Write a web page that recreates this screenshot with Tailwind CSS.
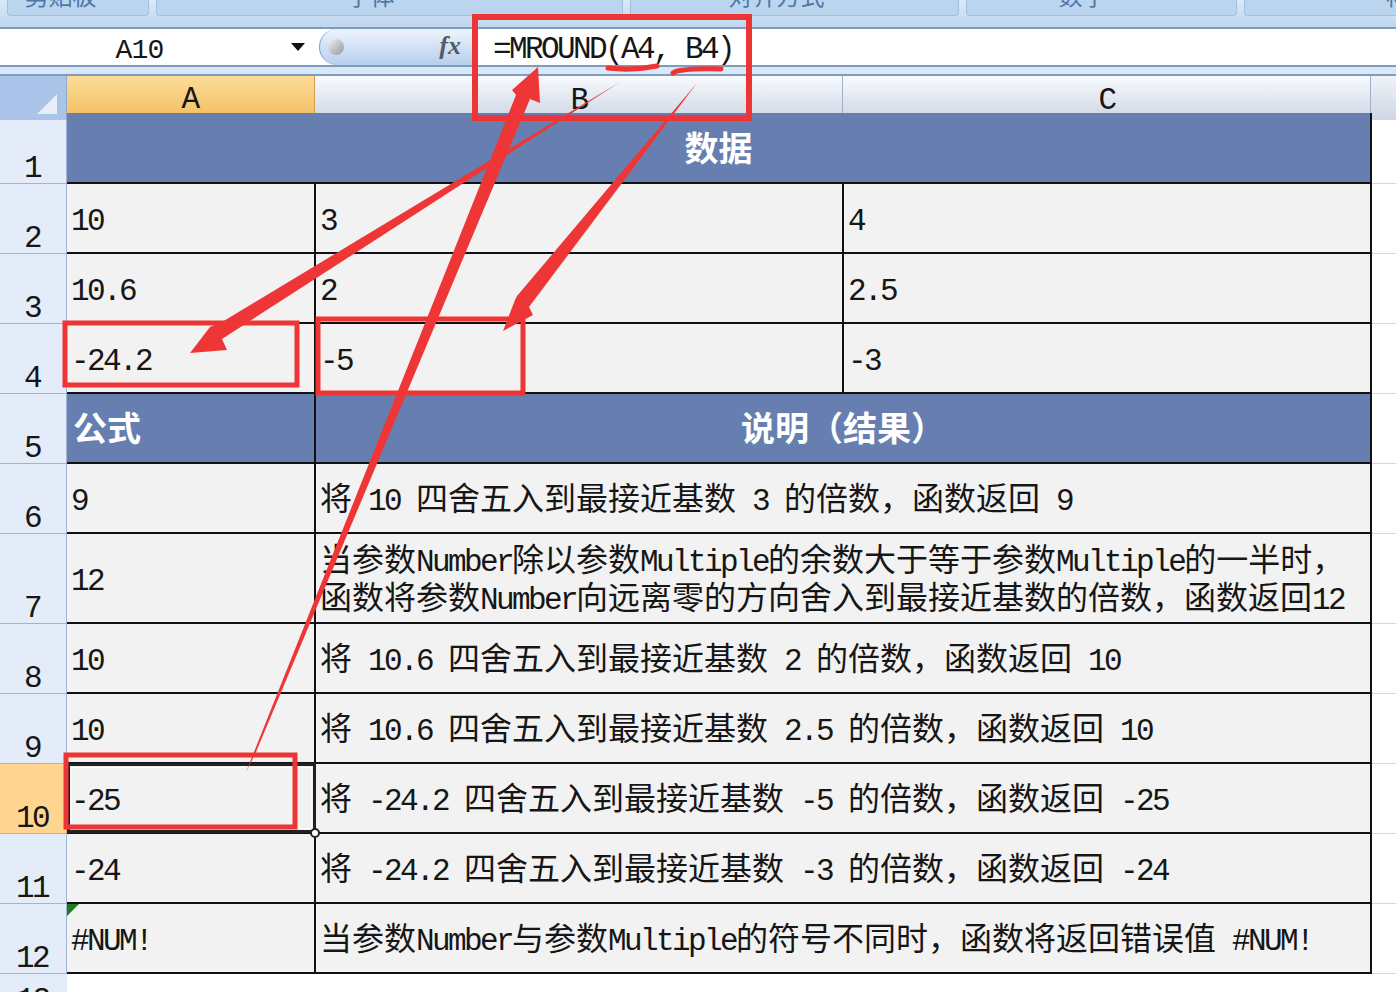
<!DOCTYPE html>
<html lang="zh-CN">
<head>
  <meta charset="UTF-8" />
  <title>MROUND</title>
  <script src="https://cdn.jsdelivr.net/npm/@tailwindcss/browser@4"></script>
</head>
<body class="bg-white">
<div class="relative w-[1396px] h-[992px] overflow-hidden text-[32px] leading-[38px] text-[#161616] font-['Liberation_Mono','Noto_Sans_CJK_SC',monospace] [&_b]:font-normal [&_b]:text-[31px] [&_b]:tracking-[-2.6px] [&_b]:whitespace-pre">

  <!-- ribbon -->
  <div class="flex h-[27px] bg-gradient-to-b from-[#d8eafb] to-[#bfd6ee] overflow-hidden text-[24px] leading-[24px] text-[#4f78aa] font-['Noto_Sans_CJK_SC',sans-serif]">
    <div class="ml-[7px] w-[142px] h-[16px] pr-[35px] flex justify-center items-end overflow-hidden bg-[#bcd5ef] border border-t-0 border-[#a3bfdd] rounded-b-[4px]"><span class="mb-[8px]">剪贴板</span></div>
    <div class="ml-[7px] w-[467px] h-[16px] pr-[38px] flex justify-center items-end overflow-hidden bg-[#bcd5ef] border border-t-0 border-[#a3bfdd] rounded-b-[4px]"><span class="mb-[8px]">字体</span></div>
    <div class="ml-[7px] w-[329px] h-[16px] pr-[36px] flex justify-center items-end overflow-hidden bg-[#bcd5ef] border border-t-0 border-[#a3bfdd] rounded-b-[4px]"><span class="mb-[8px]">对齐方式</span></div>
    <div class="ml-[7px] w-[271px] h-[16px] pr-[38px] flex justify-center items-end overflow-hidden bg-[#bcd5ef] border border-t-0 border-[#a3bfdd] rounded-b-[4px]"><span class="mb-[8px]">数字</span></div>
    <div class="ml-[7px] w-[152px] h-[16px] pl-[141px] flex items-end overflow-hidden bg-[#bcd5ef] border border-t-0 border-r-0 border-[#a3bfdd] rounded-bl-[4px]"><span class="mb-[8px] whitespace-nowrap">样式</span></div>
  </div>

  <!-- formula bar -->
  <div class="flex h-[40px] bg-white border-t-2 border-b-2 border-[#7e9cc0]">
    <div class="w-[319px] flex items-center">
      <span class="w-[279px] text-center pt-[6px]"><b class="!text-[28px] !tracking-[-0.8px]">A10</b></span>
      <span class="ml-[12px] w-0 h-0 border-x-[7px] border-x-transparent border-t-[8px] border-t-[#111]"></span>
    </div>
    <div class="w-[153px] flex items-center justify-between pl-[8px] pr-[11px] rounded-l-full border-l border-[#7e9cc0] bg-gradient-to-b from-[#eef4fc] to-[#b7cfec]">
      <span class="w-[16px] h-[16px] rounded-full bg-gradient-to-br from-[#f2f2f2] to-[#8f98a4]"></span>
      <span class="text-[26px] font-bold italic text-[#555b62] font-['Liberation_Serif',serif] -mt-[3px]">fx</span>
    </div>
    <div class="pl-[21px] flex items-center pt-[6px]"><b>=MROUND(A4, B4)</b></div>
  </div>
  <div class="h-[7px] bg-[#d9e8f9]"></div>

  <!-- column headers -->
  <div class="grid grid-cols-[67px_248px_528px_528px_25px] h-[39px] border-t-2 border-[#7e9cc0]">
    <div class="relative bg-[#a9c4e8] border-r border-[#8fa9c9]">
      <span class="absolute right-[9px] bottom-[6px] w-0 h-0 border-l-[20px] border-l-transparent border-b-[20px] border-b-[#e8eef6]"></span>
    </div>
    <div class="flex justify-center items-center pt-[5px] bg-gradient-to-b from-[#fbdc97] to-[#f4bd62] border-r border-b border-[#d99d45] pr-[2px]"><b>A</b></div>
    <div class="flex justify-center items-center pt-[5px] bg-gradient-to-b from-[#f8fafd] to-[#cdd6e5] border-r border-[#9fb0c6]"><b>B</b></div>
    <div class="flex justify-center items-center pt-[5px] bg-gradient-to-b from-[#f8fafd] to-[#cdd6e5] border-r border-[#9fb0c6]"><b>C</b></div>
    <div class="bg-gradient-to-b from-[#f0f3f8] to-[#cdd6e5]"></div>
  </div>

  <!-- sheet -->
  <div class="grid grid-cols-[67px_249px_528px_528px_24px] grid-rows-[71px_70px_70px_70px_70px_70px_90px_70px_70px_70px_70px_70px_20px] [&>div]:border-b-2 [&>div]:border-[#111]">
    <div class="!border-[#9db4d2] !border-b border-r bg-[#e3ecf8] flex items-end justify-center leading-[26px] pb-[1px] pr-[2px]"><b>1</b></div>
    <div class="col-span-3 bg-[#667fb0] border-r-2 flex justify-center items-center pb-[2px] text-[34px] font-bold text-white font-['Noto_Sans_CJK_SC',sans-serif]">数据</div>
    <div class="!border-[#cfd8e6] !border-b"></div>

    <div class="!border-[#9db4d2] !border-b border-r bg-[#e3ecf8] flex items-end justify-center leading-[26px] pb-[1px] pr-[2px]"><b>2</b></div>
    <div class="bg-[#f2f2f2] border-r-2 flex items-center pl-[4px] pt-[8px]"><b>10</b></div>
    <div class="bg-[#f2f2f2] border-r-2 flex items-center pl-[4px] pt-[8px]"><b>3</b></div>
    <div class="bg-[#f2f2f2] border-r-2 flex items-center pl-[4px] pt-[8px]"><b>4</b></div>
    <div class="!border-[#cfd8e6] !border-b"></div>

    <div class="!border-[#9db4d2] !border-b border-r bg-[#e3ecf8] flex items-end justify-center leading-[26px] pb-[1px] pr-[2px]"><b>3</b></div>
    <div class="bg-[#f2f2f2] border-r-2 flex items-center pl-[4px] pt-[8px]"><b>10.6</b></div>
    <div class="bg-[#f2f2f2] border-r-2 flex items-center pl-[4px] pt-[8px]"><b>2</b></div>
    <div class="bg-[#f2f2f2] border-r-2 flex items-center pl-[4px] pt-[8px]"><b>2.5</b></div>
    <div class="!border-[#cfd8e6] !border-b"></div>

    <div class="!border-[#9db4d2] !border-b border-r bg-[#e3ecf8] flex items-end justify-center leading-[26px] pb-[1px] pr-[2px]"><b>4</b></div>
    <div class="bg-[#f2f2f2] border-r-2 flex items-center pl-[4px] pt-[8px]"><b>-24.2</b></div>
    <div class="bg-[#f2f2f2] border-r-2 flex items-center pl-[4px] pt-[8px]"><b>-5</b></div>
    <div class="bg-[#f2f2f2] border-r-2 flex items-center pl-[4px] pt-[8px]"><b>-3</b></div>
    <div class="!border-[#cfd8e6] !border-b"></div>

    <div class="!border-[#9db4d2] !border-b border-r bg-[#e3ecf8] flex items-end justify-center leading-[26px] pb-[1px] pr-[2px]"><b>5</b></div>
    <div class="bg-[#667fb0] border-r-2 flex items-center pl-[6px] pb-[2px] text-[34px] font-bold text-white font-['Noto_Sans_CJK_SC',sans-serif]">公式</div>
    <div class="col-span-2 bg-[#667fb0] border-r-2 flex justify-center items-center pb-[2px] text-[34px] font-bold text-white font-['Noto_Sans_CJK_SC',sans-serif]">说明（结果）</div>
    <div class="!border-[#cfd8e6] !border-b"></div>

    <div class="!border-[#9db4d2] !border-b border-r bg-[#e3ecf8] flex items-end justify-center leading-[26px] pb-[1px] pr-[2px]"><b>6</b></div>
    <div class="bg-[#f2f2f2] border-r-2 flex items-center pl-[4px] pt-[8px]"><b>9</b></div>
    <div class="col-span-2 bg-[#f2f2f2] border-r-2 flex items-center pl-[4px] pt-[8px]"><span>将<b> 10 </b>四舍五入到最接近基数<b> 3 </b>的倍数，函数返回<b> 9</b></span></div>
    <div class="!border-[#cfd8e6] !border-b"></div>

    <div class="!border-[#9db4d2] !border-b border-r bg-[#e3ecf8] flex items-end justify-center leading-[26px] pb-[1px] pr-[2px]"><b>7</b></div>
    <div class="bg-[#f2f2f2] border-r-2 flex items-center pl-[4px] pt-[8px]"><b>12</b></div>
    <div class="col-span-2 bg-[#f2f2f2] border-r-2 flex flex-col justify-center pl-[4px] pt-[8px] whitespace-nowrap"><span>当参数<b>Number</b>除以参数<b>Multiple</b>的余数大于等于参数<b>Multiple</b>的一半时，</span><span>函数将参数<b>Number</b>向远离零的方向舍入到最接近基数的倍数，函数返回<b>12</b></span></div>
    <div class="!border-[#cfd8e6] !border-b"></div>

    <div class="!border-[#9db4d2] !border-b border-r bg-[#e3ecf8] flex items-end justify-center leading-[26px] pb-[1px] pr-[2px]"><b>8</b></div>
    <div class="bg-[#f2f2f2] border-r-2 flex items-center pl-[4px] pt-[8px]"><b>10</b></div>
    <div class="col-span-2 bg-[#f2f2f2] border-r-2 flex items-center pl-[4px] pt-[8px]"><span>将<b> 10.6 </b>四舍五入到最接近基数<b> 2 </b>的倍数，函数返回<b> 10</b></span></div>
    <div class="!border-[#cfd8e6] !border-b"></div>

    <div class="!border-[#9db4d2] !border-b border-r bg-[#e3ecf8] flex items-end justify-center leading-[26px] pb-[1px] pr-[2px]"><b>9</b></div>
    <div class="bg-[#f2f2f2] border-r-2 flex items-center pl-[4px] pt-[8px]"><b>10</b></div>
    <div class="col-span-2 bg-[#f2f2f2] border-r-2 flex items-center pl-[4px] pt-[8px]"><span>将<b> 10.6 </b>四舍五入到最接近基数<b> 2.5 </b>的倍数，函数返回<b> 10</b></span></div>
    <div class="!border-[#cfd8e6] !border-b"></div>

    <div class="!border-[#e3a94f] !border-b border-r bg-[#ffd58f] flex items-end justify-center leading-[26px] pb-[1px] pr-[2px]"><b>10</b></div>
    <div class="relative bg-[#f2f2f2] border-r-2 flex items-center pl-[4px] pt-[8px]"><b>-25</b>
      <span class="absolute -inset-y-[1px] left-0 -right-[2px] border-[3px] border-[#222] outline outline-white/70 -outline-offset-[5px]"></span>
      <span class="absolute -right-[6px] -bottom-[6px] w-[10px] h-[10px] rounded-full border-2 border-[#222] bg-white"></span>
    </div>
    <div class="col-span-2 bg-[#f2f2f2] border-r-2 flex items-center pl-[4px] pt-[8px]"><span>将<b> -24.2 </b>四舍五入到最接近基数<b> -5 </b>的倍数，函数返回<b> -25</b></span></div>
    <div class="!border-[#cfd8e6] !border-b"></div>

    <div class="!border-[#9db4d2] !border-b border-r bg-[#e3ecf8] flex items-end justify-center leading-[26px] pb-[1px] pr-[2px]"><b>11</b></div>
    <div class="bg-[#f2f2f2] border-r-2 flex items-center pl-[4px] pt-[8px]"><b>-24</b></div>
    <div class="col-span-2 bg-[#f2f2f2] border-r-2 flex items-center pl-[4px] pt-[8px]"><span>将<b> -24.2 </b>四舍五入到最接近基数<b> -3 </b>的倍数，函数返回<b> -24</b></span></div>
    <div class="!border-[#cfd8e6] !border-b"></div>

    <div class="!border-[#9db4d2] !border-b border-r bg-[#e3ecf8] flex items-end justify-center leading-[26px] pb-[1px] pr-[2px]"><b>12</b></div>
    <div class="relative bg-[#f2f2f2] border-r-2 flex items-center pl-[4px] pt-[8px]"><b>#NUM!</b>
      <span class="absolute left-0 top-0 w-0 h-0 border-t-[12px] border-t-[#1f7a1f] border-r-[12px] border-r-transparent"></span>
    </div>
    <div class="col-span-2 bg-[#f2f2f2] border-r-2 flex items-center pl-[4px] pt-[8px]"><span>当参数<b>Number</b>与参数<b>Multiple</b>的符号不同时，函数将返回错误值<b> #NUM!</b></span></div>
    <div class="!border-[#cfd8e6] !border-b"></div>

    <div class="!border-0 border-r bg-[#e3ecf8] flex justify-center pt-[8px] pr-[2px]"><b>13</b></div>
    <div class="!border-0 border-r !border-[#cfd8e6]"></div>
    <div class="!border-0 border-r !border-[#cfd8e6]"></div>
    <div class="!border-0 border-r !border-[#cfd8e6]"></div>
    <div class="!border-0"></div>
  </div>

  <!-- red annotations drawn over the screenshot -->
  <svg class="absolute left-0 top-0" width="1396" height="992" viewBox="0 0 1396 992" fill="none">
    <g stroke="#ee3535" stroke-width="5">
      <rect x="475" y="17" width="274" height="101" stroke-width="6"/>
      <rect x="65" y="323" width="232" height="62"/>
      <rect x="318" y="319" width="205" height="74"/>
      <rect x="66" y="755" width="229" height="72"/>
    </g>
    <path d="M608 68 Q632 71 657 66" stroke="#ee3535" stroke-width="5" stroke-linecap="round"/>
    <path d="M673 73 Q680 68 721 69" stroke="#ee3535" stroke-width="5" stroke-linecap="round"/>
    <g fill="#ef3636">
      <path d="M246 772 L516 95 L512 90 L538 67 L540 103 L530 99 L256 752 Z"/>
      <path d="M620 82 L222 322 L210 327 L190 353 L227 350 L222 339 L620 82 Z"/>
      <path d="M697 83 L517 296 L515 300 L503 331 L533 315 L529 307 Z"/>
    </g>
  </svg>
</div>
</body>
</html>
